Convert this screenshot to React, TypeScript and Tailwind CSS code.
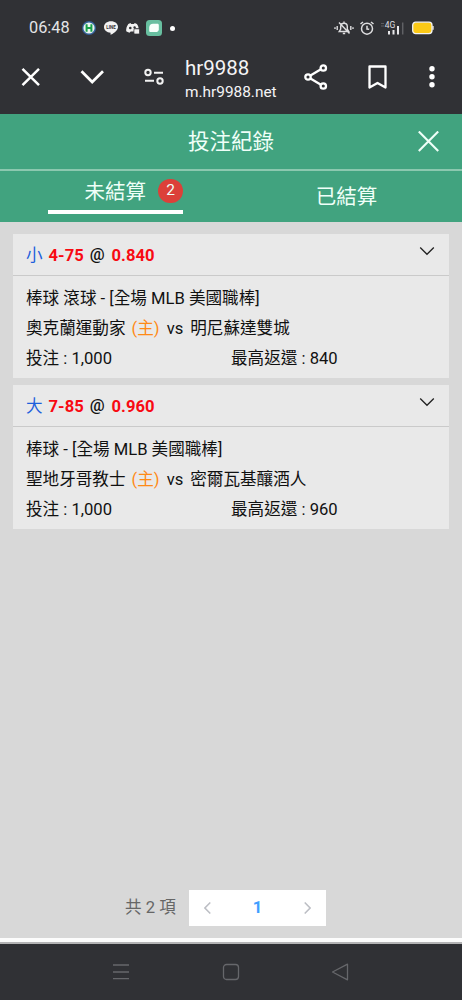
// Bet records page inside a mobile browser: status bar, address bar,
// open / settled tabs, the list of bets, the pager and the system keys.

import { useState } from "react";
import clsx from "clsx";

type Tab = "open" | "settled";

interface Bet {
  id: string;
  side: string;
  line: string;
  odds: string;
  league: string;
  home: string;
  away: string;
  stake: string;
  payout: string;
}

const BETS: Bet[] = [
  { id: "b1", side: "小", line: "4-75", odds: "0.840", league: "棒球 滾球 - [全場 MLB 美國職棒]", home: "奧克蘭運動家", away: "明尼蘇達雙城", stake: "1,000", payout: "840" },
  { id: "b2", side: "大", line: "7-85", odds: "0.960", league: "棒球 - [全場 MLB 美國職棒]", home: "聖地牙哥教士", away: "密爾瓦基釀酒人", stake: "1,000", payout: "960" },
];

function StatusBar() {
  return (
    <div className="flex h-[56px] items-center pl-[29px] pr-[28px]">
      <span className="w-[52px] pt-px text-[16.3px] text-[#e4e4e6]">06:48</span>
      {/* H badge */}
      <svg className="h-4 w-4 shrink-0" viewBox="0 0 16 16">
        <circle cx="8" cy="8" r="7" fill="#34609a" />
        <circle cx="8" cy="8" r="5.6" fill="#e9f4f0" />
        <path d="M5.6 4.2v7.6M10.4 4.2v7.6M5.6 8h4.8" stroke="#18a04a" strokeWidth="2" />
      </svg>
      {/* LINE */}
      <svg className="ml-[6px] h-4 w-4 shrink-0" viewBox="0 0 16 16">
        <path d="M8 1.3c4 0 7 2.4 7 5.6 0 3-3.4 5.6-6.800 7.700-.7.400-.800 0-.7-.6l.1-1.300C3.700 12.300 1 10 1 6.900 1 3.700 4 1.300 8 1.300z" fill="#f2f2f2" />
        <text x="8" y="8.700" textAnchor="middle" className="font-bold" fontSize="4.500" fill="#303135">LINE</text>
      </svg>
      {/* Discord */}
      <svg className="ml-[6px] h-4 w-4 shrink-0" viewBox="0 0 16 16">
        <path d="M3.300 4 5.500 3l.7 1h2.800l.7-1 2.200 1c1 1.300 1.500 2.500 1.700 4.200H9.200v3.300H5.700l-1.200 1.200C3.300 12.300 2 11.900 1.200 11.200 1 8.400 1.800 6.200 3.300 4z" fill="#f2f2f2" />
        <circle cx="5.300" cy="8" r="1.300" fill="#303135" />
        <circle cx="9.600" cy="7.500" r="1.200" fill="#303135" />
        <rect x="8.900" y="8.800" width="5.600" height="5.200" rx="1" fill="#f2f2f2" stroke="#303135" strokeWidth=".7" />
      </svg>
      {/* Messages */}
      <svg className="ml-[5px] h-4 w-4 shrink-0" viewBox="0 0 16 16">
        <rect width="16" height="16" rx="3.500" fill="#68bfa0" />
        <path d="M7 3.800h4.300c1 0 1.500.5 1.500 1.500v3.900c0 1.800-1.200 2.900-3 2.900H4.700c-1 0-1.500-.5-1.500-1.500V7.500C3.200 5.200 4.700 3.800 7 3.800z" fill="#f7fffb" />
      </svg>
      <span className="ml-[8px] h-[5px] w-[5px] rounded-full bg-white" />
      <div className="ml-auto flex items-center">
        {/* muted bell */}
        <svg className="h-5 w-5" viewBox="0 0 20 20" fill="none" stroke="#dedee0" strokeWidth="1.400">
          <path d="M5.200 13.500h9.600L13.300 11V8.500a3.300 3.300 0 0 0-6.600 0V11zM8.800 15.500h2.400M10 3.500V5M5 4.500l10.500 11M3.200 8v4M1 9.200v1.800M16.800 8v4M19 9.200v1.800" />
        </svg>
        {/* alarm */}
        <svg className="ml-[5px] h-4 w-4" viewBox="0 0 16 16" fill="none" stroke="#dedee0" strokeWidth="1.500">
          <circle cx="8" cy="8.700" r="5.500" />
          <path d="M8 5.800V9l2.200.3M1.500 4 4 2M14.500 4 12 2" />
        </svg>
        {/* signal */}
        <svg className="ml-[5px] h-4 w-6" viewBox="0 0 24 16">
          <path d="M1 3.500h3M1 6h3" stroke="#5b5c60" />
          <text x="4.800" y="8.300" fontSize="8.500" fill="#dedee0">4G</text>
          <path d="M9 14.500v-3.500M13.500 14.500V10M18 14.500V6" stroke="#e8e8ea" strokeWidth="2" />
          <path d="M22.700 14.500v-12" stroke="#606165" strokeWidth="1.500" />
        </svg>
        {/* battery */}
        <svg className="ml-[8px] h-[14px] w-[22px]" viewBox="0 0 22 14">
          <rect x=".7" y="1.200" width="19.300" height="11.400" rx="3" fill="#fbc916" stroke="#f2f2f2" strokeWidth="1.300" />
          <path d="M21 5v3.800" stroke="#f2f2f2" strokeWidth="1.300" />
        </svg>
      </div>
    </div>
  );
}

function AddressBar() {
  return (
    <div className="flex h-[58px] items-start">
      <svg className="ml-[21px] mt-[11px] h-5 w-5 shrink-0" viewBox="0 0 20 20" stroke="#fff" strokeWidth="2.500">
        <path d="m1.500 1.800 16.500 16.400m0-16.400L1.500 18.200" />
      </svg>
      <svg className="ml-[39px] mt-[11px] h-5 w-6 shrink-0" viewBox="0 0 24 20" fill="none" stroke="#fff" strokeWidth="2.700">
        <path d="m1.500 4.300 10.700 10.700L23 4.300" />
      </svg>
      <svg className="ml-[40px] mt-[11px] h-5 w-5 shrink-0" viewBox="0 0 20 20" fill="none" stroke="#f2f2f2" strokeWidth="2">
        <circle cx="4" cy="5.500" r="2.700" />
        <circle cx="16" cy="14" r="2.700" />
        <path d="M10 5.800h9M1 13.800h9" />
      </svg>
      <div className="ml-[21px] w-[106px] shrink-0 text-[#f4f4f5]">
        <p className="text-[20.500px] leading-[24px]">hr9988</p>
        <p className="mt-[2px] text-[15.400px] leading-[20px]">m.hr9988.net</p>
      </div>
      <svg className="ml-[13px] mt-[7px] h-7 w-6 shrink-0" viewBox="0 0 24 28" fill="none" stroke="#fff" strokeWidth="2.300">
        <path d="M6 12.700 16.500 6.500M6 15.300l10.500 6.200" />
        <circle cx="4" cy="14" r="2.700" />
        <circle cx="19.300" cy="5" r="2.700" />
        <circle cx="19.300" cy="23" r="2.700" />
      </svg>
      <svg className="ml-[40px] mt-[9px] h-6 w-[19px] shrink-0" viewBox="0 0 19 24" fill="none" stroke="#fff" strokeWidth="2.300" strokeLinejoin="round">
        <path d="M1.500 1.500h16V22.500l-8-4.500-8 4.500z" />
      </svg>
      <svg className="ml-[42px] mt-[10px] h-[22px] w-[6px] shrink-0" viewBox="0 0 6 22" fill="#fff">
        <circle cx="3" cy="2.700" r="2.700" />
        <circle cx="3" cy="10.700" r="2.700" />
        <circle cx="3" cy="18.700" r="2.700" />
      </svg>
    </div>
  );
}

function BetCard({ bet }: { bet: Bet }) {
  return (
    <article className="bg-[#e9e9e9] text-[16.600px] text-[#111]">
      <header className="flex h-[42px] items-center border-b-[1.500px] border-[#cacaca] pl-[13px] pr-[14px]">
        <span className="mr-[6px] pt-[3px] text-[#1d5fdc]">{bet.side}</span>
        <span className="pt-[3px] font-bold text-[#f80a12]">{bet.line}</span>
        <span className="ml-[6px] mr-[7px] pt-[2px] font-medium">@</span>
        <span className="pt-[3px] font-bold text-[#f80a12]">{bet.odds}</span>
        <svg className="mb-[8px] ml-auto h-[10px] w-4" viewBox="0 0 16 10" fill="none" stroke="#222" strokeWidth="1.300">
          <path d="m1.200 1.500 6.800 6.800 6.800-6.800" />
        </svg>
      </header>
      <div className="h-[102px] pl-[13px] pt-[8px] leading-[30px]">
        <p className="whitespace-nowrap">{bet.league}</p>
        <p className="flex whitespace-nowrap">
          {bet.home}
          <span className="ml-[6px] mr-[7px] text-[#ff8a16]">(主)</span>
          <span className="mr-[7px]">vs</span>
          {bet.away}
        </p>
        <p className="flex whitespace-nowrap">
          <span className="w-[205px]">投注 : {bet.stake}</span>
          <span>最高返還 : {bet.payout}</span>
        </p>
      </div>
    </article>
  );
}

export default function App() {
  const [tab, setTab] = useState<Tab>("open");

  return (
    <div className="flex h-[1000px] w-[462px] flex-col overflow-hidden bg-[#d8d8d8] font-[Roboto,'Noto_Sans_CJK_TC',sans-serif]">
      <div className="h-[114px] shrink-0 bg-[#303135]">
        <StatusBar />
        <AddressBar />
      </div>

      {/* Title */}
      <div className="grid h-[57px] shrink-0 grid-cols-[1fr_auto_1fr] items-center border-b-2 border-[#8bc8af] bg-[#41a37f] text-[#effff8]">
        <h1 className="col-start-2 pt-[2px] text-[21.500px]">投注紀錄</h1>
        <button className="mr-[23px] justify-self-end">
          <svg className="h-[21px] w-[21px]" viewBox="0 0 21 21" stroke="currentColor" strokeWidth="2.100">
            <path d="m.8.5 19.400 19.400m0-19.400L.8 19.900" />
          </svg>
        </button>
      </div>

      {/* Tabs */}
      <div className="grid h-[51px] shrink-0 grid-cols-2 bg-[#41a37f] text-[20.500px] text-[#effff8]">
        <button
          onClick={() => setTab("open")}
          className={clsx("mx-[48px] flex h-[43px] items-center justify-end whitespace-nowrap border-b-4 pt-[4px]", tab === "open" ? "border-white" : "border-transparent")}
        >
          未結算
          <span className="mb-[4px] ml-[12px] flex h-6 w-[25px] items-center justify-center rounded-full bg-[#dc4039] text-[15.500px]">2</span>
        </button>
        <button
          onClick={() => setTab("settled")}
          className={clsx("mx-[48px] h-[43px] border-b-4 pt-[13px] leading-[26px]", tab === "settled" ? "border-white" : "border-transparent")}
        >
          已結算
        </button>
      </div>

      {/* Bets */}
      <main className="flex flex-1 flex-col gap-[7px] px-[13px] pt-[12px]">
        {tab === "open" && BETS.map((bet) => <BetCard key={bet.id} bet={bet} />)}
      </main>

      {/* Pager */}
      <div className="flex h-[48px] shrink-0 items-start pl-[125px] text-[16.600px] text-[#666]">
        <span className="w-[64px] whitespace-nowrap leading-[36px]">共 2 項</span>
        <div className="flex h-[36px] w-[137px] items-center justify-between bg-white px-[15px]">
          <svg className="h-3 w-[7px]" viewBox="0 0 7 12" fill="none" stroke="#bcbec4" strokeWidth="1.500">
            <path d="M6.300.5.900 6l5.400 5.500" />
          </svg>
          <span className="pt-px font-bold text-[#409eff]">1</span>
          <svg className="h-3 w-[7px]" viewBox="0 0 7 12" fill="none" stroke="#bcbec4" strokeWidth="1.500">
            <path d="M.7.5 6.100 6 .7 11.500" />
          </svg>
        </div>
      </div>
      <div className="h-[4px] shrink-0 bg-[#fcfcfc]" />
      <div className="h-[2px] shrink-0 bg-[#b4b4b5]" />

      {/* System keys */}
      <nav className="flex h-[56px] shrink-0 items-center bg-[#303135] pl-[112px] text-[#66676b]">
        <svg className="h-[18px] w-[18px]" viewBox="0 0 18 18" stroke="currentColor" strokeWidth="1.300">
          <path d="M1 2h16M1 9h16M1 15.700h16" />
        </svg>
        <svg className="ml-[92px] h-[18px] w-[18px]" viewBox="0 0 18 18" fill="none" stroke="currentColor" strokeWidth="1.300">
          <rect x="1.500" y="1.500" width="15" height="15" rx="3" />
        </svg>
        <svg className="ml-[91px] h-[18px] w-[18px]" viewBox="0 0 18 18" fill="none" stroke="currentColor" strokeWidth="1.300" strokeLinejoin="round">
          <path d="M16.500 1.200v15.600L1.500 9z" />
        </svg>
      </nav>
    </div>
  );
}
